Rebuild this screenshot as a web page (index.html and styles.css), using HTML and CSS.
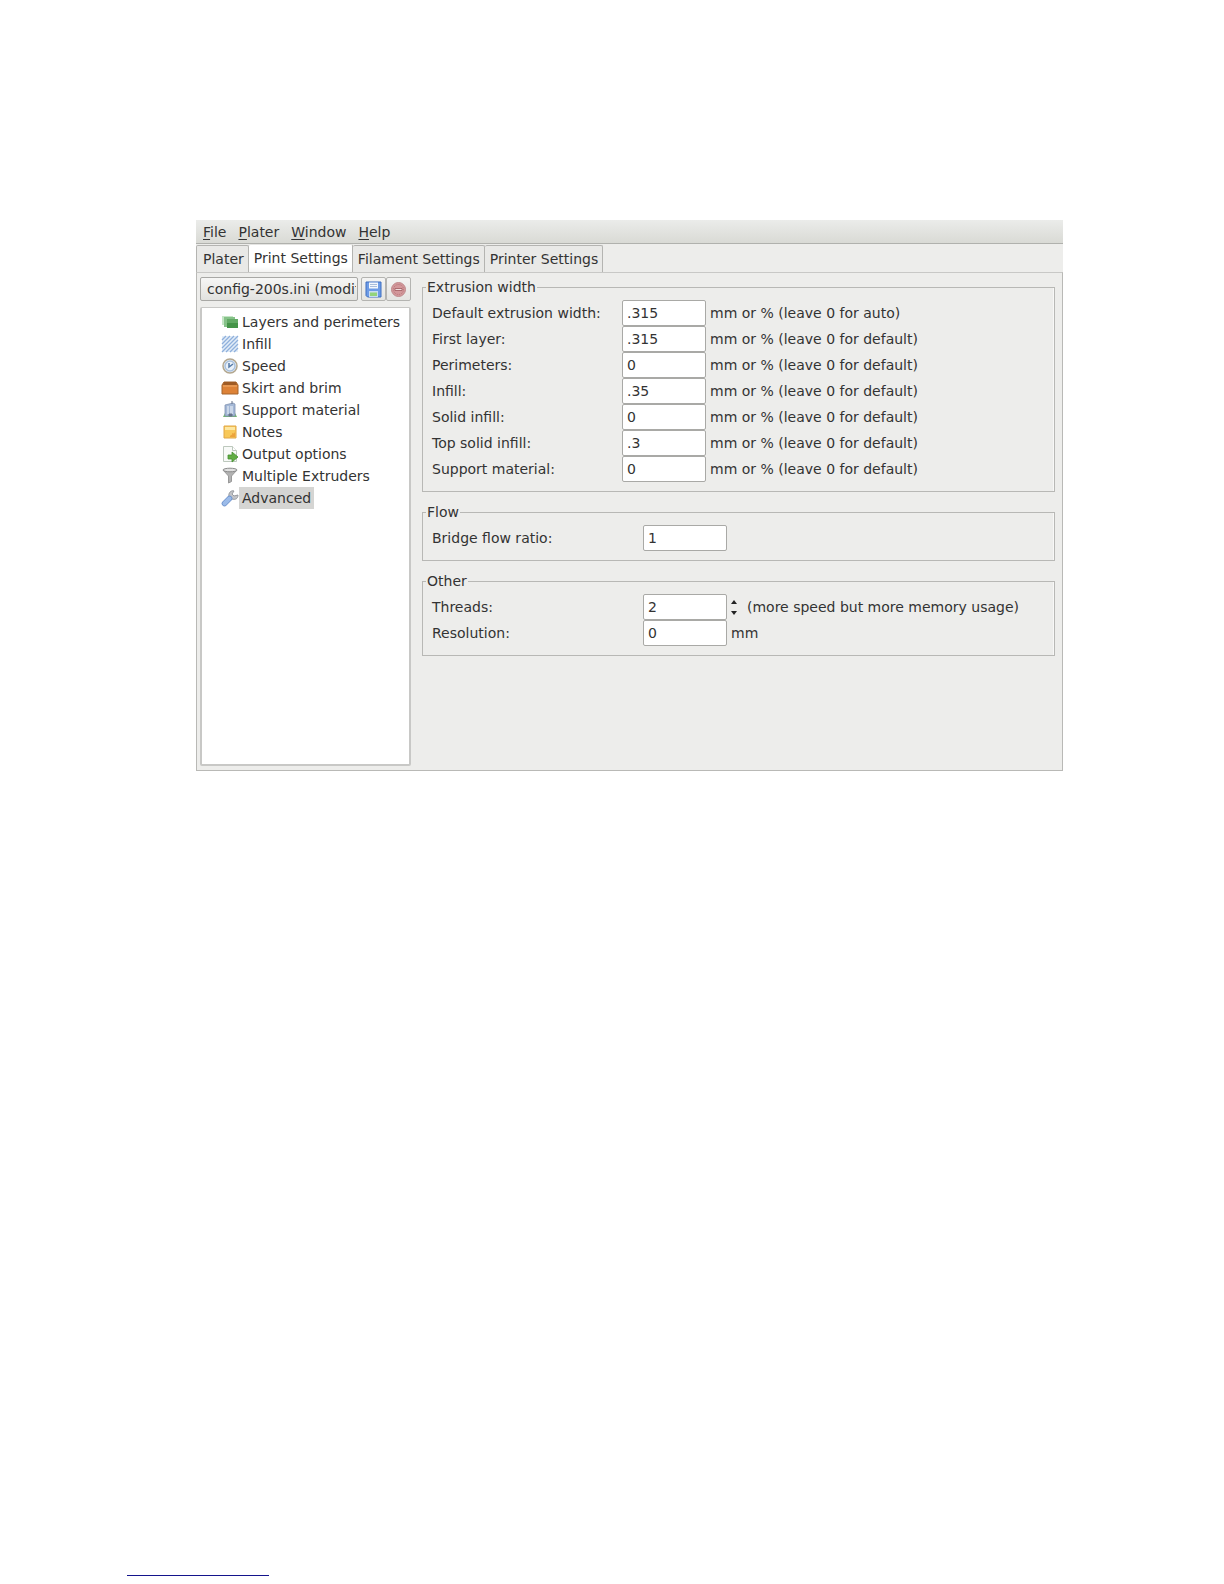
FILE: index.html
```html
<!DOCTYPE html>
<html lang="en">
<head>
<meta charset="utf-8">
<meta name="viewport" content="width=device-width, initial-scale=1">
<title>Print Settings</title>
<link rel="stylesheet" href="styles.css">
</head>
<body>
<main class="window">
  <nav class="menubar" aria-label="Main menu">
    <button type="button"><u>F</u>ile</button>
    <button type="button"><u>P</u>later</button>
    <button type="button"><u>W</u>indow</button>
    <button type="button"><u>H</u>elp</button>
  </nav>
  <div class="tabs" role="tablist">
    <button type="button" class="tab" role="tab">Plater</button>
    <button type="button" class="tab tab-active" role="tab" aria-selected="true">Print Settings</button>
    <button type="button" class="tab" role="tab">Filament Settings</button>
    <button type="button" class="tab" role="tab">Printer Settings</button>
  </div>
  <div class="page">
    <aside class="sidebar">
      <div class="presets">
        <select class="preset" aria-label="Preset"><option>config-200s.ini (modified)</option></select>
        <div class="preset-actions">
          <button type="button" class="tool" aria-label="Save preset">
            <svg width="17" height="17" viewBox="0 0 17 17"><path d="M1 1h15v15H2.500L1 14.500z" fill="#6d9be6" stroke="#3f6fc0"/><path d="M4 1.500h9v6H4z" fill="#f4f8fd"/><path d="M5 3.500h7M5 5.500h7" stroke="#a9bddb"/><path d="M4 10h9v6H4z" fill="#c9dcf3"/><path d="M5 11.500h7V15H5z" fill="#94d47b"/></svg>
          </button>
          <button type="button" class="tool" aria-label="Delete preset">
            <svg width="17" height="17" viewBox="0 0 17 17"><circle cx="8.500" cy="8.500" r="7" fill="#d3979a" stroke="#c08a8c"/><circle cx="8.500" cy="8.500" r="5" fill="none" stroke="#b87579" stroke-dasharray="1 1"/><path d="M5 7.500h7v2H5z" fill="#f0dede" stroke="#a0595e" stroke-width=".8"/></svg>
          </button>
        </div>
      </div>
      <ul class="tree">
        <li><a href="#layers"><svg width="18" height="18" viewBox="0 0 18 18"><path d="M1 3h11v9H1z" fill="#c5e6c6"/><path d="M3 4h11v10H3z" fill="#86c289"/><path d="M6 6h11v9H6z" fill="#459449"/><path d="M6 6h11v4H6z" fill="#62aa65"/></svg><span>Layers and perimeters</span></a></li>
        <li><a href="#infill"><svg width="18" height="18" viewBox="0 0 18 18"><path d="M1 1h16v16H1z" fill="#e3edf8"/><path d="M1 5l4-4M1 9l8-8M1 13l12-12M1 17L17 1M5 17L17 5M9 17l8-8M13 17l4-4" stroke="#8fb0dc" stroke-width="1.300"/></svg><span>Infill</span></a></li>
        <li><a href="#speed"><svg width="18" height="18" viewBox="0 0 18 18"><circle cx="9" cy="9" r="7" fill="#e8f0f9" stroke="#b3a78f" stroke-width="1.500"/><circle cx="9" cy="9" r="5" fill="none" stroke="#a9c0dc" stroke-width="1.500"/><path d="M8 6v4l4-3" fill="none" stroke="#547aa8" stroke-width="1.500"/></svg><span>Speed</span></a></li>
        <li><a href="#skirt"><svg width="18" height="18" viewBox="0 0 18 18"><path d="M3 3h12l2 3v9H1V6z" fill="#dd8237" stroke="#a5652c"/><path d="M3 3h12l1 3H2z" fill="#9f5b24"/><path d="M2 7h14" stroke="#f1ad6d"/></svg><span>Skirt and brim</span></a></li>
        <li><a href="#support"><svg width="18" height="18" viewBox="0 0 18 18"><path d="M2 16l2-4h10l2 4z" fill="#73b46e"/><path d="M4 4l8-2 2 1v12H4z" fill="#a4b8d6" stroke="#8293b2" stroke-width=".8"/><path d="M6 6h2m1 0h3M6 8h2m1 0h3M6 10h2m1 0h3M6 12h2m1 0h3" stroke="#f2f6fb"/><path d="M11 0v3M8 13h3v2H8z" stroke="#68748b" fill="#68748b"/></svg><span>Support material</span></a></li>
        <li><a href="#notes"><svg width="18" height="18" viewBox="0 0 18 18"><path d="M3 3h12v12H3z" fill="#f8c859" stroke="#e0a646"/><path d="M4 4h10v3H4z" fill="#fde7a1"/><path d="M9 14c0-3 3-1 2-4 2 1 3 0 3-2v6z" fill="#eca23b"/></svg><span>Notes</span></a></li>
        <li><a href="#output"><svg width="18" height="18" viewBox="0 0 18 18"><path d="M2.500 1.500h9l4 4v11h-13z" fill="#f8faf8" stroke="#bdc8bd"/><path d="M11.500 1.500v4h4" fill="#fff" stroke="#bdc8bd"/><path d="M7 10h4V7l6 5-6 5v-3H7z" fill="#62ad44" stroke="#458f31" stroke-width=".8"/></svg><span>Output options</span></a></li>
        <li><a href="#extruders"><svg width="18" height="18" viewBox="0 0 18 18"><path d="M2 3l5.500 6v7l3-1.500V9L16 3z" fill="#b2b2b2" stroke="#999"/><ellipse cx="9" cy="3" rx="7" ry="1.800" fill="#e0e0e0" stroke="#8b8b8b"/></svg><span>Multiple Extruders</span></a></li>
        <li><a href="#advanced" class="selected" aria-current="page"><svg width="18" height="18" viewBox="0 0 18 18"><path d="M8 8c-1-4 2-7 5-6l-2 3 2 2 4-1c0 4-3 5-6 4L9 12z" fill="#c4c5c8" stroke="#989ba0"/><path d="M3.500 14.500l5-5" stroke="#6f93cc" stroke-width="5.500" stroke-linecap="round"/><path d="M3.500 14.500l5-5" stroke="#9bbbe9" stroke-width="4" stroke-linecap="round"/></svg><span>Advanced</span></a></li>
      </ul>
    </aside>
    <form class="settings">
      <fieldset>
        <legend>Extrusion width</legend>
        <div class="row"><label for="w-default">Default extrusion width:</label><input id="w-default" type="text" value=".315"><span>mm or % (leave 0 for auto)</span></div>
        <div class="row"><label for="w-first">First layer:</label><input id="w-first" type="text" value=".315"><span>mm or % (leave 0 for default)</span></div>
        <div class="row"><label for="w-perimeters">Perimeters:</label><input id="w-perimeters" type="text" value="0"><span>mm or % (leave 0 for default)</span></div>
        <div class="row"><label for="w-infill">Infill:</label><input id="w-infill" type="text" value=".35"><span>mm or % (leave 0 for default)</span></div>
        <div class="row"><label for="w-solid">Solid infill:</label><input id="w-solid" type="text" value="0"><span>mm or % (leave 0 for default)</span></div>
        <div class="row"><label for="w-top">Top solid infill:</label><input id="w-top" type="text" value=".3"><span>mm or % (leave 0 for default)</span></div>
        <div class="row"><label for="w-support">Support material:</label><input id="w-support" type="text" value="0"><span>mm or % (leave 0 for default)</span></div>
      </fieldset>
      <fieldset class="wide-labels">
        <legend>Flow</legend>
        <div class="row"><label for="bridge">Bridge flow ratio:</label><input id="bridge" type="text" value="1"></div>
      </fieldset>
      <fieldset class="wide-labels">
        <legend>Other</legend>
        <div class="row"><label for="threads">Threads:</label><input id="threads" type="text" inputmode="numeric" value="2">
          <div class="spinner">
            <button type="button" aria-label="Increase threads"><svg width="6" height="4" viewBox="0 0 6 4"><path d="M3 0l3 4H0z" fill="#222"/></svg></button>
            <button type="button" aria-label="Decrease threads"><svg width="6" height="4" viewBox="0 0 6 4"><path d="M0 0h6L3 4z" fill="#222"/></svg></button>
          </div>
          <span>(more speed but more memory usage)</span></div>
        <div class="row"><label for="resolution">Resolution:</label><input id="resolution" type="text" value="0"><span>mm</span></div>
      </fieldset>
    </form>
  </div>
</main>
<footer class="footer"><hr></footer>
</body>
</html>
```

FILE: styles.css
```css
* {
  box-sizing: border-box;
}

body {
  display: flex;
  flex-direction: column;
  min-height: 100vh;
  margin: 0;
  padding: 220px 161px 8px 127px;
  background: #fff;
  color: #333;
  font: 14px/22px "DejaVu Sans", sans-serif;
}

button,
input,
select {
  margin: 0;
  color: inherit;
  font: inherit;
}

button {
  padding: 0;
  border: 0;
  background: none;
}

svg {
  display: block;
  flex: none;
}

.window {
  margin-left: 69px;
  background: #ededeb;
}

.menubar {
  display: flex;
  gap: 12px;
  height: 24px;
  padding: 0 7px;
  border-bottom: 1px solid #b0b1ad;
  background: linear-gradient(#ebecea, #d9dad5);
}

.menubar u {
  text-underline-offset: 2px;
}

.tabs {
  display: flex;
  align-items: flex-end;
  height: 28px;
}

.tab {
  height: 27px;
  padding: 0 4px 0 5px;
  border: 1px solid #b4b4b1;
  border-width: 1px 1px 0 0;
  border-radius: 2px 2px 0 0;
  background: #e9e9e7;
  white-space: nowrap;
}

.tab:first-child {
  padding-left: 6px;
  border-left-width: 1px;
}

.tab-active {
  height: 28px;
  padding-bottom: 2px;
  border-top-color: #e4e4e2;
  background: linear-gradient(#fff 80%, #f4f4f3);
}

.page {
  display: flex;
  gap: 11px;
  padding: 4px 7px 4px 3px;
  border: 1px solid #b9b9b6;
  border-top: 1px solid #c8c8c6;
}

.sidebar {
  display: flex;
  flex: 0 0 211px;
  flex-direction: column;
  gap: 6px;
}

.presets {
  display: flex;
  gap: 3px;
}

.preset {
  flex: 1;
  width: 0;
  height: 24px;
  padding: 0 1px 0 6px;
  border: 1px solid #a8a8a5;
  border-radius: 2px;
  background: linear-gradient(#f6f6f5, #e2e2df);
  appearance: none;
}

.preset-actions {
  display: flex;
}

.tool {
  display: grid;
  place-items: center;
  width: 25px;
  height: 24px;
  border: 1px solid #b4b4b1;
  border-radius: 2px;
  background: linear-gradient(#f4f4f3, #e4e4e1);
}

.tree {
  flex: 1;
  min-height: 459px;
  margin: 0;
  padding: 3px 0 0 19px;
  border: 2px solid #c8c8c6;
  border-top-width: 1px;
  border-radius: 2px;
  background: #fff;
  list-style: none;
}

.tree a {
  display: flex;
  align-items: center;
  color: inherit;
  text-decoration: none;
}

.tree span {
  padding: 0 3px;
}

.selected span {
  background: #d5d5d3;
}

.settings {
  display: flex;
  flex: 1;
  flex-direction: column;
  gap: 10px;
}

fieldset {
  min-width: 0;
  margin: 0;
  padding: 3px 9px 9px;
  border: 1px solid #b8b8b5;
  box-shadow: inset -1px 0 #f8f8f7;
}

legend {
  margin-left: -6px;
  padding: 0 1px;
  line-height: 20px;
}

.row {
  display: flex;
  align-items: center;
  height: 26px;
}

.row label {
  flex: 0 0 190px;
}

.wide-labels .row label {
  flex-basis: 211px;
}

.row input {
  width: 84px;
  height: 26px;
  margin-right: 4px;
  padding: 0 4px;
  border: 1px solid #a9a9a6;
  border-radius: 2px;
  background: #fff;
}

.spinner {
  display: grid;
  gap: 7px;
  margin-right: 10px;
}

.spinner button {
  line-height: 0;
}

.footer {
  margin-top: auto;
}

.footer hr {
  width: 142px;
  margin: 0;
  border: 0;
  border-top: 1px solid #14148c;
}
```
